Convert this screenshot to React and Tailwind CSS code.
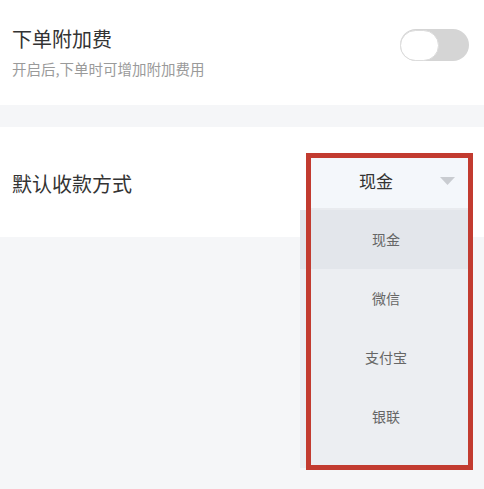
import React from "react";

const font = { fontFamily: '"Noto Sans CJK SC", "Noto Sans", sans-serif' };

export default function App() {
  const items = ["现金", "微信", "支付宝", "银联"];
  return (
    <div className="relative w-[484px] h-[489px] overflow-hidden bg-[#f5f6f8]" style={font}>
      <div className="h-[105px] bg-white flex items-start justify-between pl-[12px] pr-[15px]">
        <div className="pt-[25px] flex flex-col">
          <div className="text-[20px] leading-[28px] text-[#333333]">下单附加费</div>
          <div className="mt-[6px] text-[14.5px] leading-[20px] text-[#9a9a9a]">开启后,下单时可增加附加费用</div>
        </div>
        <div className="mt-[29px] w-[69px] h-[32px] rounded-full bg-[#d5d5d5] flex items-center">
          <div className="w-[39px] h-[31px] rounded-full bg-white border border-[#dcdcdc]" />
        </div>
      </div>
      <div className="h-[22px]" />
      <div className="h-[110px] bg-white flex items-center pl-[12px]">
        <div className="text-[20px] leading-[28px] text-[#333333] mt-[4px]">默认收款方式</div>
      </div>

      <div className="absolute left-[300px] top-[153px] w-[172px]">
        <div className="ml-[6px] h-[57px] bg-[#f4f7fb] border-b-2 border-[#e9ebef] flex items-center">
          <div className="flex-1 text-center text-[17px] text-[#333333] pl-[6px]">现金</div>
          <svg width="15" height="8" viewBox="0 0 15 8" className="mr-[17px]">
            <polygon points="0,0 15,0 7.5,8" fill="#c9ccd1" />
          </svg>
        </div>
        <div className="bg-[#eceef2] h-[258px]">
          {items.map((t, i) => (
            <div
              key={t}
              className={`h-[59px] flex items-center justify-center text-[14px] text-[#666666] ${i === 0 ? "bg-[#e3e6eb]" : ""}`}
            >
              {t}
            </div>
          ))}
        </div>
      </div>

      <div className="absolute left-[306px] top-[153px] w-[167px] h-[317px] border-[5px] border-[#c23b30]" />
    </div>
  );
}
